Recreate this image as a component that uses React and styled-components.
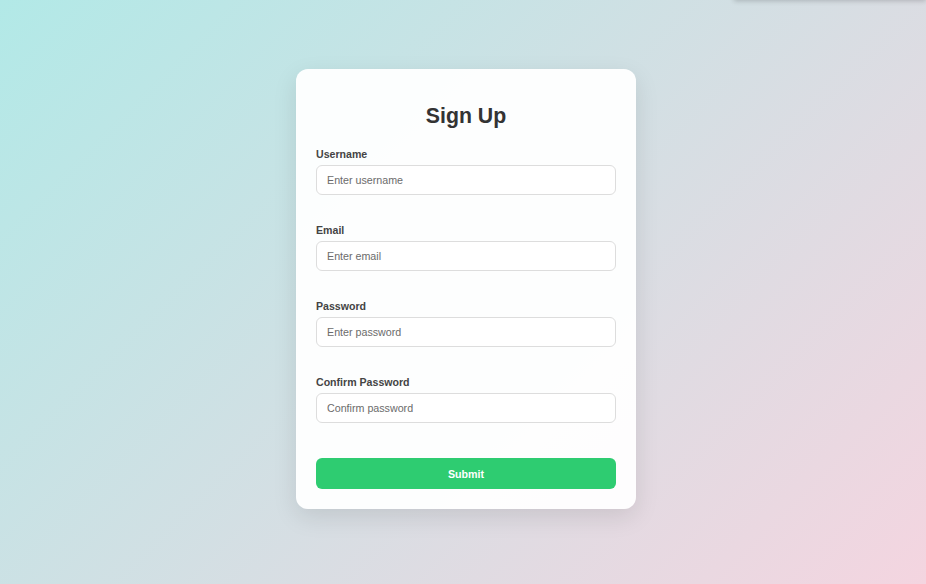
import styled, { createGlobalStyle } from 'styled-components';

const GlobalStyle = createGlobalStyle`
  * {
    box-sizing: border-box;
  }

  html,
  body {
    margin: 0;
    height: 100%;
  }

  body {
    font-family: 'Liberation Sans', Arial, sans-serif;
    background: linear-gradient(135deg, #b2e9e7 0%, #f4d5e0 100%);
    overflow: hidden;
  }

  #root {
    height: 100%;
  }
`;

const StyledPage = styled.div`
  min-height: 100%;
  display: flex;
  justify-content: center;
  align-items: flex-start;
  padding: 69px 0 0 6px;
`;

// toast tray sitting just above the viewport; only its shadow shows
const StyledToastTray = styled.div`
  position: fixed;
  top: -50px;
  right: 0;
  width: 192px;
  height: 50px;
  background: #fff;
  box-shadow: 0 1px 5px rgba(0, 0, 0, 0.2);
`;

const StyledCard = styled.form`
  width: 340px;
  padding: 20px;
  background: rgba(255, 255, 255, 0.95);
  border-radius: 12px;
  box-shadow: 0 8px 24px rgba(0, 0, 0, 0.1);
`;

const StyledTitle = styled.h2`
  margin: 14px 0 19px;
  font-size: 21.3px;
  line-height: 26px;
  font-weight: 700;
  text-align: center;
  color: #333;
`;

const StyledField = styled.div`
  display: flex;
  flex-direction: column;
  margin-bottom: 29px;
`;

const StyledLabel = styled.label`
  margin-bottom: 4px;
  font-size: 10.6px;
  line-height: 13px;
  font-weight: 700;
  color: #444;
`;

const StyledInput = styled.input`
  width: 100%;
  height: 30px;
  padding: 0 10px;
  font-family: inherit;
  font-size: 10.7px;
  color: #333;
  background: #fff;
  border: 1px solid #ddd;
  border-radius: 6px;
  outline: none;

  &::placeholder {
    color: #6b6b6b;
  }
`;

const StyledSubmit = styled.button`
  width: 100%;
  height: 31px;
  margin-top: 6px;
  font-family: inherit;
  font-size: 10.7px;
  font-weight: 700;
  color: #fff;
  background: #2ecc71;
  border: none;
  border-radius: 6px;
  cursor: pointer;
`;

const fields = [
  { id: 'username', label: 'Username', type: 'text', placeholder: 'Enter username' },
  { id: 'email', label: 'Email', type: 'email', placeholder: 'Enter email' },
  { id: 'password', label: 'Password', type: 'password', placeholder: 'Enter password' },
  { id: 'confirm', label: 'Confirm Password', type: 'password', placeholder: 'Confirm password' },
];

const App = () => {
  return (
    <>
      <GlobalStyle />
      <StyledToastTray />
      <StyledPage>
        <StyledCard onSubmit={(e) => e.preventDefault()}>
          <StyledTitle>Sign Up</StyledTitle>
          {fields.map((f) => (
            <StyledField key={f.id}>
              <StyledLabel htmlFor={f.id}>{f.label}</StyledLabel>
              <StyledInput id={f.id} type={f.type} placeholder={f.placeholder} />
            </StyledField>
          ))}
          <StyledSubmit type="submit">Submit</StyledSubmit>
        </StyledCard>
      </StyledPage>
    </>
  );
};

export default App;
